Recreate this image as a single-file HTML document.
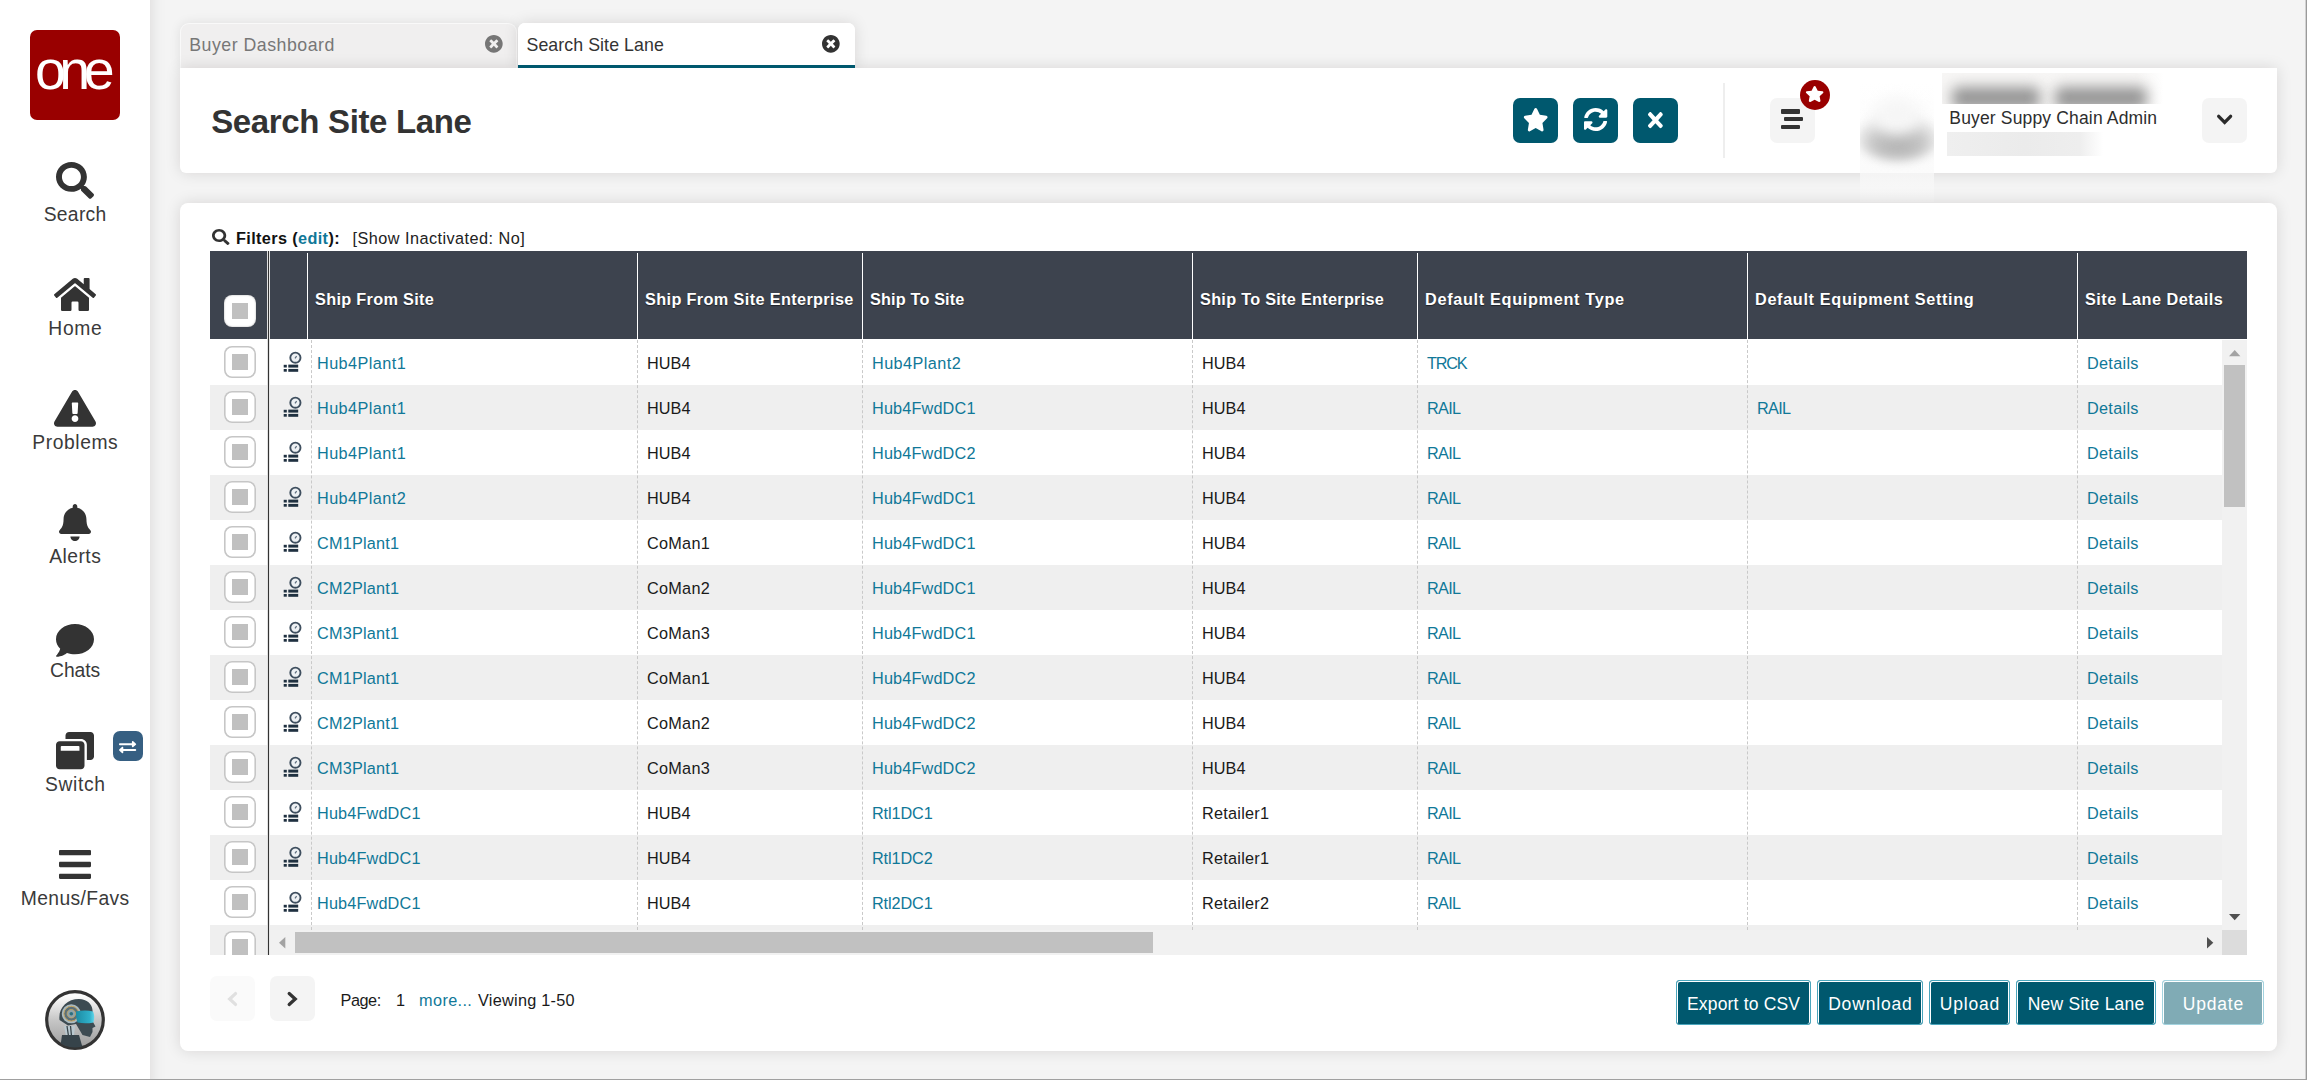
<!DOCTYPE html>
<html lang="en"><head><meta charset="utf-8"><title>Search Site Lane</title>
<style>
*{box-sizing:border-box;margin:0;padding:0}
html,body{width:2307px;height:1080px;overflow:hidden}
body{background:#f4f4f4;font-family:"Liberation Sans",sans-serif;color:#222;position:relative}
.ic{position:absolute;display:block;overflow:visible}
.abs{position:absolute}
.t{position:absolute;white-space:nowrap;line-height:1}
#side{position:absolute;left:-20px;top:-20px;width:170px;height:1120px;background:#fff;box-shadow:0 0 15px rgba(25,12,0,.125)}
.lbl{position:absolute;left:0;width:150px;text-align:center;font-size:19.3px;color:#3a3a3a;line-height:1;white-space:nowrap}
#logo{position:absolute;left:30px;top:30px;width:90px;height:90px;border-radius:7px;background:#990000}
.tab{position:absolute;top:23px;height:45px;border-radius:7px 7px 0 0}
.panel{position:absolute;background:#fff;box-shadow:0 0 15px rgba(25,12,0,.125)}
.hbtn{position:absolute;top:98px;width:45px;height:45px;border-radius:7px;background:#00586e}
.gbtn{position:absolute;width:45px;height:45px;border-radius:7px;background:#f4f4f4}
.th{position:absolute;top:251px;height:88px;background:#3d434e}
.thl{position:absolute;top:253px;width:1px;height:86px;background:#fff}
.tht{position:absolute;top:291px;font-weight:700;font-size:16.25px;color:#fff;white-space:nowrap;line-height:1;letter-spacing:.3px;text-shadow:0 1px 1px rgba(0,0,0,.5)}
.row{position:absolute;left:210px;width:2013px;height:45px}
.row.g{background:#efefef}
.c{position:absolute;font-size:16.25px;white-space:nowrap;line-height:1;color:#1a1a1a}
a.c,.lk{color:#107898;text-decoration:none}
.cb{position:absolute;left:224.2px;width:31.6px;height:31.6px;border-radius:8px;background:#fff;box-shadow:inset 0 0 0 1.6px #c6c6c6}
.cb i{position:absolute;left:7.8px;top:7.9px;width:16px;height:16px;background:#c0c0c0}
.vl{position:absolute;top:340px;width:0;height:590px;border-left:1px dashed #c9c9c9}
.btn{position:absolute;top:980px;height:45px;background:#00586e;border:1px solid #4ba6bd;border-radius:3px;box-shadow:inset 1px 1px 0 0 #fff,inset -1px 0 0 0 #fff;color:#fff;font-size:17.5px;text-align:center;line-height:47px;white-space:nowrap}
</style></head>
<body>
<div id="side"></div>
<div id="logo"><span class="t" style="left:5px;top:13px;font-size:55.5px;color:#fff;letter-spacing:-6.5px">one</span></div>
<svg class="ic" style="left:56px;top:162.3px;width:38px;height:36.7px" viewBox="0 0 512 512" preserveAspectRatio="none"><path fill="#333" d="M505 442.7L405.3 343c-4.5-4.5-10.6-7-17-7H372c27.6-35.3 44-79.700 44-128C416 93.100 322.900 0 208 0S0 93.100 0 208s93.100 208 208 208c48.300 0 92.700-16.400 128-44v16.300c0 6.400 2.500 12.500 7 17l99.700 99.700c9.400 9.400 24.600 9.400 33.900 0l28.300-28.300c9.400-9.400 9.400-24.600.100-34zM208 336c-70.700 0-128-57.200-128-128 0-70.700 57.200-128 128-128 70.700 0 128 57.200 128 128 0 70.700-57.200 128-128 128z"/></svg>
<div class="lbl" style="top:204.66px;letter-spacing:0.301px;padding-left:0.301px">Search</div>
<svg class="ic" style="left:54px;top:277.7px;width:42px;height:33.0px" viewBox="0 32 576 448" preserveAspectRatio="none"><path fill="#333" d="M280.37 148.26L96 300.11V464a16 16 0 0 0 16 16l112.06-.29a16 16 0 0 0 15.920-16V368a16 16 0 0 1 16-16h64a16 16 0 0 1 16 16v95.640a16 16 0 0 0 16 16.050L464 480a16 16 0 0 0 16-16V300L295.670 148.260a12.190 12.190 0 0 0-15.300 0zM571.600 251.470L488 182.560V44.050a12 12 0 0 0-12-12h-56a12 12 0 0 0-12 12v72.610L318.470 43a48 48 0 0 0-61 0L4.340 251.470a12 12 0 0 0-1.600 16.900l25.500 31A12 12 0 0 0 45.150 301l235.220-193.740a12.190 12.190 0 0 1 15.300 0L530.900 301a12 12 0 0 0 16.900-1.600l25.500-31a12 12 0 0 0-1.700-16.930z"/></svg>
<div class="lbl" style="top:318.66px;letter-spacing:0.621px;padding-left:0.621px">Home</div>
<svg class="ic" style="left:54px;top:390px;width:42px;height:36.7px" viewBox="0 0 576 512" preserveAspectRatio="none"><path fill="#333" d="M569.517 440.013C587.975 472.007 564.806 512 527.94 512H48.054c-36.937 0-59.999-40.055-41.577-71.987L246.423 23.985c18.467-32.009 64.720-31.951 83.154 0l239.940 416.028zM288 354c-25.405 0-46 20.595-46 46s20.595 46 46 46 46-20.595 46-46-20.595-46-46-46zm-43.673-165.346l7.418 136c.347 6.364 5.609 11.346 11.982 11.346h48.546c6.373 0 11.635-4.982 11.982-11.346l7.418-136c.375-6.874-5.098-12.654-11.982-12.654h-63.383c-6.884 0-12.356 5.780-11.981 12.654z"/></svg>
<div class="lbl" style="top:432.66px;letter-spacing:0.566px;padding-left:0.566px">Problems</div>
<svg class="ic" style="left:59px;top:504px;width:32px;height:37px" viewBox="0 0 448 512" preserveAspectRatio="none"><path fill="#333" d="M224 512c35.32 0 63.97-28.65 63.97-64H160.030c0 35.350 28.650 64 63.970 64zm215.390-149.710c-19.320-20.760-55.470-51.990-55.470-154.290 0-77.700-54.480-139.900-127.940-155.160V32c0-17.670-14.320-32-31.980-32s-31.980 14.330-31.980 32v20.840C118.560 68.100 64.080 130.300 64.080 208c0 102.300-36.150 133.530-55.470 154.290-6 6.450-8.660 14.160-8.610 21.710.110 16.400 12.980 32 32.100 32h383.800c19.120 0 32-15.600 32.100-32 .050-7.550-2.610-15.270-8.610-21.710z"/></svg>
<div class="lbl" style="top:546.66px;letter-spacing:0.481px;padding-left:0.481px">Alerts</div>
<svg class="ic" style="left:56px;top:624px;width:38px;height:32.7px" viewBox="0 32 512 448" preserveAspectRatio="none"><path fill="#333" d="M256 32C114.6 32 0 125.1 0 240c0 49.600 21.400 95 57 130.700C44.500 421.100 2.700 466 2.200 466.500c-2.200 2.300-2.800 5.700-1.500 8.700S4.800 480 8 480c66.300 0 116-31.800 140.600-51.400 32.700 12.300 69 19.400 107.400 19.400 141.400 0 256-93.100 256-208S397.400 32 256 32z"/></svg>
<div class="lbl" style="top:660.66px;letter-spacing:-0.094px;padding-left:0px">Chats</div>
<svg class="ic" style="left:56px;top:731.7px;width:38px;height:37.3px" viewBox="0 0 512 512" preserveAspectRatio="none"><path fill="#333" d="M512 48v288c0 26.500-21.500 48-48 48h-48V176c0-44.100-35.900-80-80-80H128V48c0-26.500 21.500-48 48-48h288c26.500 0 48 21.500 48 48zM384 176v288c0 26.500-21.500 48-48 48H48c-26.500 0-48-21.500-48-48V176c0-26.500 21.500-48 48-48h288c26.500 0 48 21.500 48 48zm-68 28c0-6.600-5.400-12-12-12H76c-6.600 0-12 5.400-12 12v52h252v-52z"/></svg>
<div class="lbl" style="top:774.66px;letter-spacing:0.601px;padding-left:0.601px">Switch</div>
<div class="abs" style="left:113px;top:731px;width:30px;height:30px;border-radius:7px;background:#365f82"></div>
<svg class="ic" style="left:118.9px;top:741px;width:17.2px;height:12.2px" viewBox="0 56 512 400" preserveAspectRatio="none"><path fill="#fff" d="M0 168v-16c0-13.255 10.745-24 24-24h360V80c0-21.367 25.899-32.042 40.971-16.971l80 80c9.372 9.373 9.372 24.569 0 33.941l-80 80C409.956 271.982 384 261.456 384 240v-48H24c-13.255 0-24-10.745-24-24zm488 152H128v-48c0-21.314-25.862-32.080-40.971-16.971l-80 80c-9.372 9.373-9.372 24.569 0 33.941l80 80C102.057 463.997 128 453.437 128 432v-48h360c13.255 0 24-10.745 24-24v-16c0-13.255-10.745-24-24-24z"/></svg>
<svg class="ic" style="left:59px;top:850px;width:32px;height:29px" viewBox="0 60 448 392" preserveAspectRatio="none"><path fill="#333" d="M16 132h416c8.837 0 16-7.163 16-16V76c0-8.837-7.163-16-16-16H16C7.163 60 0 67.163 0 76v40c0 8.837 7.163 16 16 16zm0 160h416c8.837 0 16-7.163 16-16v-40c0-8.837-7.163-16-16-16H16c-8.837 0-16 7.163-16 16v40c0 8.837 7.163 16 16 16zm0 160h416c8.837 0 16-7.163 16-16v-40c0-8.837-7.163-16-16-16H16c-8.837 0-16 7.163-16 16v40c0 8.837 7.163 16 16 16z"/></svg>
<div class="lbl" style="top:888.66px;letter-spacing:0.365px;padding-left:0.365px">Menus/Favs</div>
<svg class="ic" style="left:45px;top:990px;width:60px;height:60px" viewBox="0 0 60 60">
<defs><linearGradient id="rg" x1="0" y1="0" x2="0" y2="1"><stop offset="0.08" stop-color="#fbfbfb"/><stop offset="0.5" stop-color="#c6c6c6"/><stop offset="1" stop-color="#9c9c9c"/></linearGradient>
<linearGradient id="vg" x1="0" y1="0" x2="1" y2="0"><stop offset="0" stop-color="#1d8ba3"/><stop offset="0.75" stop-color="#2fb0c9"/><stop offset="1" stop-color="#63d6ea"/></linearGradient>
<clipPath id="rc"><circle cx="30" cy="30" r="27.5"/></clipPath></defs>
<circle cx="30" cy="30" r="28.3" fill="url(#rg)" stroke="#333" stroke-width="3.2"/>
<g clip-path="url(#rc)">
<path d="M19 36L21 46 29 46 30 36z" fill="#b9c8cf"/>
<path d="M22 36l1.500 10M25.500 36l1 10" stroke="#39454b" stroke-width="1.300" fill="none"/>
<path d="M17 45h17l4 14H15z" fill="#36434a"/>
<path d="M14.500 30C13 18 22 9 34 9c8 0 13 5 13.500 11l.5 12 2.500 4.500-3 1.500v4l-2.500 5-7.500-2-6.500-11-8 1.500z" fill="#3d4b52"/>
<circle cx="26.300" cy="23.700" r="9.500" fill="#a9bac1"/>
<circle cx="26.300" cy="23.700" r="7.400" fill="#5c7078" stroke="#c8a762" stroke-width="1"/>
<circle cx="26.300" cy="23.700" r="4.200" fill="#8fa3ab" stroke="#c8a762" stroke-width=".8"/>
<circle cx="26.300" cy="23.700" r="1.800" fill="#2c6f80"/>
<path d="M31 21.500c6-1.500 12-1.500 17 0 1.500 3 1.500 7 .5 11-6 1.200-11 1-16 0-1.500-4-1.500-8-1.500-11z" fill="url(#vg)"/>
</g>
</svg>
<div class="tab" style="left:180px;width:337px;background:#f0efef;border:1px solid #f9f9f9;border-bottom:0;border-radius:9px 9px 0 0;box-shadow:0 0 12px rgba(25,12,0,.09)"></div>
<div class="tab" style="left:518px;width:337px;background:#fff;box-shadow:0 0 15px rgba(25,12,0,.125)"></div>
<span class="t" style="left:189.2px;top:36.7px;font-size:17.75px;color:#777;letter-spacing:0.504px">Buyer Dashboard</span>
<svg class="ic" style="left:485.2px;top:35.1px;width:17.7px;height:17.7px" viewBox="8 8 496 496" preserveAspectRatio="none"><path fill="#767676" d="M256 8C119 8 8 119 8 256s111 248 248 248 248-111 248-248S393 8 256 8zm121.6 313.1c4.7 4.7 4.7 12.3 0 17L338 377.600c-4.700 4.700-12.300 4.700-17 0L256 312l-65.100 65.600c-4.700 4.700-12.300 4.700-17 0L134.400 338c-4.700-4.700-4.700-12.300 0-17l65.600-65-65.600-65.100c-4.700-4.700-4.700-12.300 0-17l39.600-39.600c4.700-4.700 12.300-4.700 17 0l65 65.700 65.100-65.600c4.700-4.700 12.300-4.700 17 0l39.600 39.600c4.700 4.700 4.700 12.300 0 17L312 256l65.600 65.100z"/></svg>
<div class="panel" style="left:180px;top:68px;width:2097px;height:104.5px;border-radius:0 0 6px 6px"></div>
<div class="tab" style="left:518px;width:337px;background:#fff;border-bottom:3px solid #00586e"></div>
<span class="t" style="left:526.5px;top:36.7px;font-size:17.75px;color:#333;letter-spacing:0.074px">Search Site Lane</span>
<svg class="ic" style="left:822.2px;top:35.1px;width:17.7px;height:17.7px" viewBox="8 8 496 496" preserveAspectRatio="none"><path fill="#333" d="M256 8C119 8 8 119 8 256s111 248 248 248 248-111 248-248S393 8 256 8zm121.6 313.1c4.7 4.7 4.7 12.3 0 17L338 377.600c-4.700 4.700-12.300 4.700-17 0L256 312l-65.100 65.600c-4.700 4.700-12.300 4.700-17 0L134.400 338c-4.700-4.700-4.700-12.300 0-17l65.600-65-65.600-65.100c-4.700-4.700-4.700-12.300 0-17l39.600-39.600c4.700-4.700 12.300-4.700 17 0l65 65.700 65.100-65.600c4.700-4.700 12.300-4.700 17 0l39.600 39.600c4.700 4.700 4.700 12.300 0 17L312 256l65.600 65.100z"/></svg>
<span class="t" style="left:211.2px;top:105px;font-size:33px;font-weight:700;color:#333;letter-spacing:-.35px">Search Site Lane</span>
<div class="hbtn" style="left:1513px"></div><div class="hbtn" style="left:1573px"></div><div class="hbtn" style="left:1633px"></div>
<svg class="ic" style="left:1523.8px;top:107.8px;width:23.4px;height:23.4px" viewBox="24 0 528 512" preserveAspectRatio="none"><path fill="#fff" d="M259.3 17.8L194 150.2 47.9 171.5c-26.2 3.8-36.7 36.1-17.7 54.6l105.7 103-25 145.5c-4.5 26.3 23.2 46 46.4 33.7L288 439.6l130.7 68.7c23.2 12.2 50.9-7.4 46.4-33.7l-25-145.5 105.7-103c19-18.500 8.500-50.800-17.700-54.600L382 150.200 316.700 17.800c-11.700-23.600-45.600-23.900-57.400 0z"/></svg>
<svg class="ic" style="left:1583.9px;top:108px;width:23.3px;height:23px" viewBox="8 8 496 496" preserveAspectRatio="none"><path fill="#fff" d="M370.72 133.28C339.458 104.008 298.888 87.962 255.848 88c-77.458.068-144.328 53.178-162.791 126.850-1.344 5.363-6.122 9.150-11.651 9.150H24.103c-7.498 0-13.194-6.807-11.807-14.176C33.933 94.924 134.813 8 256 8c66.448 0 126.791 26.136 171.315 68.685L463.030 40.970C478.149 25.851 504 36.559 504 57.941V192c0 13.255-10.745 24-24 24H345.941c-21.382 0-32.090-25.851-16.971-40.971l41.750-41.749zM32 296h134.059c21.382 0 32.090 25.851 16.971 40.971l-41.750 41.750c31.262 29.273 71.835 45.319 114.876 45.280 77.418-.070 144.315-53.144 162.787-126.849 1.344-5.363 6.122-9.150 11.651-9.150h57.304c7.498 0 13.194 6.807 11.807 14.176C478.067 417.076 377.187 504 256 504c-66.448 0-126.791-26.136-171.315-68.685L48.970 471.030C33.851 486.149 8 475.441 8 454.059V320c0-13.255 10.745-24 24-24z"/></svg>
<svg class="ic" style="left:1648.2px;top:111.7px;width:14.8px;height:16.3px" viewBox="0 80 352 352" preserveAspectRatio="none"><path fill="#fff" d="M242.72 256l100.07-100.07c12.28-12.28 12.28-32.19 0-44.48l-22.240-22.240c-12.280-12.280-32.190-12.280-44.480 0L176 189.280 75.930 89.210c-12.280-12.280-32.190-12.280-44.480 0L9.210 111.450c-12.280 12.280-12.280 32.190 0 44.480L109.280 256 9.210 356.070c-12.280 12.280-12.280 32.190 0 44.480l22.240 22.240c12.280 12.280 32.200 12.280 44.480 0L176 322.720l100.070 100.070c12.280 12.280 32.200 12.280 44.480 0l22.240-22.240c12.280-12.280 12.280-32.190 0-44.480L242.720 256z"/></svg>
<div class="abs" style="left:1723px;top:83px;width:2px;height:75px;background:#eee"></div>
<div class="gbtn" style="left:1770px;top:98px"></div>
<div class="abs" style="left:1781px;top:109.4px;width:19.2px;height:4.2px;border-radius:1px;background:#333"></div>
<div class="abs" style="left:1783.9px;top:117.3px;width:19.2px;height:4.2px;border-radius:1px;background:#333"></div>
<div class="abs" style="left:1781px;top:125.3px;width:19.2px;height:4.2px;border-radius:1px;background:#333"></div>
<div class="abs" style="left:1800px;top:80px;width:30px;height:30px;border-radius:50%;background:#990000"></div>
<svg class="ic" style="left:1806px;top:86.4px;width:17.3px;height:16.0px" viewBox="24 0 528 512" preserveAspectRatio="none"><path fill="#fff" d="M259.3 17.8L194 150.2 47.9 171.5c-26.2 3.8-36.7 36.1-17.7 54.6l105.7 103-25 145.5c-4.5 26.3 23.2 46 46.4 33.7L288 439.6l130.7 68.7c23.2 12.2 50.9-7.4 46.4-33.7l-25-145.5 105.7-103c19-18.500 8.500-50.800-17.700-54.600L382 150.200 316.700 17.800c-11.700-23.600-45.600-23.900-57.400 0z"/></svg>
<div class="abs" style="left:1860px;top:83px;width:74px;height:119px;overflow:hidden;background:linear-gradient(180deg,rgba(255,255,255,.9) 0,rgba(250,250,250,.75) 70%,rgba(247,247,247,.6) 100%)"><div class="abs" style="left:-4px;top:32px;width:84px;height:46px;border-radius:50%;background:radial-gradient(ellipse at 50% 62%,#b2b2b2 0,#c4c4c4 40%,rgba(228,228,228,.6) 70%,rgba(245,245,245,0) 100%);filter:blur(5px)"></div><div class="abs" style="left:12px;top:14px;width:50px;height:38px;border-radius:50%;background:#f6f6f6;filter:blur(7px)"></div></div>
<div class="abs" style="left:1942px;top:73px;width:222px;height:30.5px;overflow:hidden;background:linear-gradient(90deg,#f7f6f5 0,#f7f6f5 88%,#fff 100%)"><div class="abs" style="left:10px;top:14px;width:88px;height:22px;border-radius:6px;background:#959595;filter:blur(7px)"></div><div class="abs" style="left:113px;top:14px;width:92px;height:22px;border-radius:6px;background:#959595;filter:blur(7px)"></div></div>
<span class="t" style="left:1949.3px;top:110.3px;font-size:17.5px;color:#2d2d2d;letter-spacing:0.159px">Buyer Suppy Chain Admin</span>
<div class="abs" style="left:1947px;top:132px;width:156px;height:24px;background:linear-gradient(90deg,#efefef 0,#ebebeb 50%,#eeeeee 85%,#fff 100%)"></div>
<div class="gbtn" style="left:2202px;top:98px"></div>
<svg class="ic" style="left:2212px;top:108px;width:25px;height:24px" viewBox="0 0 25 24"><path d="M6.700 8.300L12.650 14.400l5.950-6.100" fill="none" stroke="#2a2a2a" stroke-width="3.300" stroke-linecap="round" stroke-linejoin="miter"/></svg>
<div class="panel" style="left:180px;top:203px;width:2097px;height:848px;border-radius:8px"></div>
<svg class="ic" style="left:212px;top:229px;width:17.5px;height:16px" viewBox="0 0 512 512" preserveAspectRatio="none"><path fill="#333" d="M505 442.7L405.3 343c-4.5-4.5-10.6-7-17-7H372c27.6-35.3 44-79.700 44-128C416 93.100 322.900 0 208 0S0 93.100 0 208s93.100 208 208 208c48.300 0 92.700-16.400 128-44v16.300c0 6.400 2.500 12.500 7 17l99.700 99.700c9.400 9.400 24.600 9.400 33.900 0l28.300-28.300c9.400-9.400 9.400-24.600.100-34zM208 336c-70.700 0-128-57.200-128-128 0-70.700 57.200-128 128-128 70.700 0 128 57.200 128 128 0 70.700-57.200 128-128 128z"/></svg>
<span class="t" style="left:236px;top:230px;font-size:16.25px;font-weight:700;color:#111;letter-spacing:.37px">Filters (<span style="color:#107898">edit</span>):</span>
<span class="t" style="left:352.5px;top:230px;font-size:16.25px;color:#222;letter-spacing:.46px">[Show Inactivated: No]</span>
<div class="th" style="left:210px;width:57px"></div>
<div class="th" style="left:270px;width:1977px"></div>
<div class="thl" style="left:307px"></div>
<span class="tht" style="left:315px;letter-spacing:0.325px">Ship From Site</span>
<div class="thl" style="left:637px"></div>
<span class="tht" style="left:645px;letter-spacing:0.368px">Ship From Site Enterprise</span>
<div class="thl" style="left:862px"></div>
<span class="tht" style="left:870px;letter-spacing:0.156px">Ship To Site</span>
<div class="thl" style="left:1192px"></div>
<span class="tht" style="left:1200px;letter-spacing:0.287px">Ship To Site Enterprise</span>
<div class="thl" style="left:1417px"></div>
<span class="tht" style="left:1425px;letter-spacing:0.682px">Default Equipment Type</span>
<div class="thl" style="left:1747px"></div>
<span class="tht" style="left:1755px;letter-spacing:0.653px">Default Equipment Setting</span>
<div class="thl" style="left:2077px"></div>
<span class="tht" style="left:2085px;letter-spacing:0.477px">Site Lane Details</span>
<div class="abs" style="left:224px;top:295px;width:32px;height:32px;border-radius:8px;background:#fff;box-shadow:0 0 2px rgba(0,0,0,.35) inset"><i class="abs" style="left:8px;top:8px;width:16px;height:16px;background:#c0c0c0"></i></div>
<div class="row" style="top:340px"></div>
<div class="row g" style="top:385px"></div>
<div class="row" style="top:430px"></div>
<div class="row g" style="top:475px"></div>
<div class="row" style="top:520px"></div>
<div class="row g" style="top:565px"></div>
<div class="row" style="top:610px"></div>
<div class="row g" style="top:655px"></div>
<div class="row" style="top:700px"></div>
<div class="row g" style="top:745px"></div>
<div class="row" style="top:790px"></div>
<div class="row g" style="top:835px"></div>
<div class="row" style="top:880px"></div>
<div class="row g" style="top:925px;height:30px"></div>
<div class="vl" style="left:311px"></div>
<div class="vl" style="left:637px"></div>
<div class="vl" style="left:862px"></div>
<div class="vl" style="left:1192px"></div>
<div class="vl" style="left:1417px"></div>
<div class="vl" style="left:1747px"></div>
<div class="vl" style="left:2077px"></div>
<div class="cb" style="top:346.2px"><i></i></div>
<svg class="ic" style="left:283px;top:351.2px;width:19px;height:22px" viewBox="0 0 19 22"><circle cx="12.4" cy="6.7" r="5.1" fill="#eef1f4" stroke="#3f4f5f" stroke-width="1.9"/><path d="M12 7.300l1.600-2.200" stroke="#5a6a7a" stroke-width="1.200" fill="none"/><rect x="5.300" y="13.600" width="9.900" height="3" fill="#1f3040"/><rect x="0.700" y="13.800" width="3.100" height="2.700" fill="#1f3040"/><rect x="5.300" y="17.900" width="9.900" height="2.900" fill="#1f3040"/><rect x="0.700" y="18" width="3.100" height="2.700" fill="#1f3040"/></svg>
<span class="c lk" style="left:317px;top:355.2px;letter-spacing:0.421px">Hub4Plant1</span>
<span class="c" style="left:647px;top:355.2px;letter-spacing:0.07px">HUB4</span>
<span class="c lk" style="left:872px;top:355.2px;letter-spacing:0.421px">Hub4Plant2</span>
<span class="c" style="left:1202px;top:355.2px;letter-spacing:0.07px">HUB4</span>
<span class="c lk" style="left:1427px;top:355.2px;letter-spacing:-1.247px">TRCK</span>
<span class="c lk" style="left:2087px;top:355.2px;letter-spacing:0.291px">Details</span>
<div class="cb" style="top:391.2px"><i></i></div>
<svg class="ic" style="left:283px;top:396.2px;width:19px;height:22px" viewBox="0 0 19 22"><circle cx="12.4" cy="6.7" r="5.1" fill="#eef1f4" stroke="#3f4f5f" stroke-width="1.9"/><path d="M12 7.300l1.600-2.200" stroke="#5a6a7a" stroke-width="1.200" fill="none"/><rect x="5.300" y="13.600" width="9.900" height="3" fill="#1f3040"/><rect x="0.700" y="13.800" width="3.100" height="2.700" fill="#1f3040"/><rect x="5.300" y="17.900" width="9.900" height="2.900" fill="#1f3040"/><rect x="0.700" y="18" width="3.100" height="2.700" fill="#1f3040"/></svg>
<span class="c lk" style="left:317px;top:400.2px;letter-spacing:0.421px">Hub4Plant1</span>
<span class="c" style="left:647px;top:400.2px;letter-spacing:0.07px">HUB4</span>
<span class="c lk" style="left:872px;top:400.2px;letter-spacing:0.152px">Hub4FwdDC1</span>
<span class="c" style="left:1202px;top:400.2px;letter-spacing:0.07px">HUB4</span>
<span class="c lk" style="left:1427px;top:400.2px;letter-spacing:-0.712px">RAIL</span>
<span class="c lk" style="left:1757px;top:400.2px;letter-spacing:-0.712px">RAIL</span>
<span class="c lk" style="left:2087px;top:400.2px;letter-spacing:0.291px">Details</span>
<div class="cb" style="top:436.2px"><i></i></div>
<svg class="ic" style="left:283px;top:441.2px;width:19px;height:22px" viewBox="0 0 19 22"><circle cx="12.4" cy="6.7" r="5.1" fill="#eef1f4" stroke="#3f4f5f" stroke-width="1.9"/><path d="M12 7.300l1.600-2.200" stroke="#5a6a7a" stroke-width="1.200" fill="none"/><rect x="5.300" y="13.600" width="9.900" height="3" fill="#1f3040"/><rect x="0.700" y="13.800" width="3.100" height="2.700" fill="#1f3040"/><rect x="5.300" y="17.900" width="9.900" height="2.900" fill="#1f3040"/><rect x="0.700" y="18" width="3.100" height="2.700" fill="#1f3040"/></svg>
<span class="c lk" style="left:317px;top:445.2px;letter-spacing:0.421px">Hub4Plant1</span>
<span class="c" style="left:647px;top:445.2px;letter-spacing:0.07px">HUB4</span>
<span class="c lk" style="left:872px;top:445.2px;letter-spacing:0.152px">Hub4FwdDC2</span>
<span class="c" style="left:1202px;top:445.2px;letter-spacing:0.07px">HUB4</span>
<span class="c lk" style="left:1427px;top:445.2px;letter-spacing:-0.712px">RAIL</span>
<span class="c lk" style="left:2087px;top:445.2px;letter-spacing:0.291px">Details</span>
<div class="cb" style="top:481.2px"><i></i></div>
<svg class="ic" style="left:283px;top:486.2px;width:19px;height:22px" viewBox="0 0 19 22"><circle cx="12.4" cy="6.7" r="5.1" fill="#eef1f4" stroke="#3f4f5f" stroke-width="1.9"/><path d="M12 7.300l1.600-2.200" stroke="#5a6a7a" stroke-width="1.200" fill="none"/><rect x="5.300" y="13.600" width="9.900" height="3" fill="#1f3040"/><rect x="0.700" y="13.800" width="3.100" height="2.700" fill="#1f3040"/><rect x="5.300" y="17.900" width="9.900" height="2.900" fill="#1f3040"/><rect x="0.700" y="18" width="3.100" height="2.700" fill="#1f3040"/></svg>
<span class="c lk" style="left:317px;top:490.2px;letter-spacing:0.421px">Hub4Plant2</span>
<span class="c" style="left:647px;top:490.2px;letter-spacing:0.07px">HUB4</span>
<span class="c lk" style="left:872px;top:490.2px;letter-spacing:0.152px">Hub4FwdDC1</span>
<span class="c" style="left:1202px;top:490.2px;letter-spacing:0.07px">HUB4</span>
<span class="c lk" style="left:1427px;top:490.2px;letter-spacing:-0.712px">RAIL</span>
<span class="c lk" style="left:2087px;top:490.2px;letter-spacing:0.291px">Details</span>
<div class="cb" style="top:526.2px"><i></i></div>
<svg class="ic" style="left:283px;top:531.2px;width:19px;height:22px" viewBox="0 0 19 22"><circle cx="12.4" cy="6.7" r="5.1" fill="#eef1f4" stroke="#3f4f5f" stroke-width="1.9"/><path d="M12 7.300l1.600-2.200" stroke="#5a6a7a" stroke-width="1.200" fill="none"/><rect x="5.300" y="13.600" width="9.900" height="3" fill="#1f3040"/><rect x="0.700" y="13.800" width="3.100" height="2.700" fill="#1f3040"/><rect x="5.300" y="17.900" width="9.900" height="2.900" fill="#1f3040"/><rect x="0.700" y="18" width="3.100" height="2.700" fill="#1f3040"/></svg>
<span class="c lk" style="left:317px;top:535.2px;letter-spacing:0.195px">CM1Plant1</span>
<span class="c" style="left:647px;top:535.2px;letter-spacing:0.27px">CoMan1</span>
<span class="c lk" style="left:872px;top:535.2px;letter-spacing:0.152px">Hub4FwdDC1</span>
<span class="c" style="left:1202px;top:535.2px;letter-spacing:0.07px">HUB4</span>
<span class="c lk" style="left:1427px;top:535.2px;letter-spacing:-0.712px">RAIL</span>
<span class="c lk" style="left:2087px;top:535.2px;letter-spacing:0.291px">Details</span>
<div class="cb" style="top:571.2px"><i></i></div>
<svg class="ic" style="left:283px;top:576.2px;width:19px;height:22px" viewBox="0 0 19 22"><circle cx="12.4" cy="6.7" r="5.1" fill="#eef1f4" stroke="#3f4f5f" stroke-width="1.9"/><path d="M12 7.300l1.600-2.200" stroke="#5a6a7a" stroke-width="1.200" fill="none"/><rect x="5.300" y="13.600" width="9.900" height="3" fill="#1f3040"/><rect x="0.700" y="13.800" width="3.100" height="2.700" fill="#1f3040"/><rect x="5.300" y="17.900" width="9.900" height="2.900" fill="#1f3040"/><rect x="0.700" y="18" width="3.100" height="2.700" fill="#1f3040"/></svg>
<span class="c lk" style="left:317px;top:580.2px;letter-spacing:0.195px">CM2Plant1</span>
<span class="c" style="left:647px;top:580.2px;letter-spacing:0.27px">CoMan2</span>
<span class="c lk" style="left:872px;top:580.2px;letter-spacing:0.152px">Hub4FwdDC1</span>
<span class="c" style="left:1202px;top:580.2px;letter-spacing:0.07px">HUB4</span>
<span class="c lk" style="left:1427px;top:580.2px;letter-spacing:-0.712px">RAIL</span>
<span class="c lk" style="left:2087px;top:580.2px;letter-spacing:0.291px">Details</span>
<div class="cb" style="top:616.2px"><i></i></div>
<svg class="ic" style="left:283px;top:621.2px;width:19px;height:22px" viewBox="0 0 19 22"><circle cx="12.4" cy="6.7" r="5.1" fill="#eef1f4" stroke="#3f4f5f" stroke-width="1.9"/><path d="M12 7.300l1.600-2.200" stroke="#5a6a7a" stroke-width="1.200" fill="none"/><rect x="5.300" y="13.600" width="9.900" height="3" fill="#1f3040"/><rect x="0.700" y="13.800" width="3.100" height="2.700" fill="#1f3040"/><rect x="5.300" y="17.900" width="9.900" height="2.900" fill="#1f3040"/><rect x="0.700" y="18" width="3.100" height="2.700" fill="#1f3040"/></svg>
<span class="c lk" style="left:317px;top:625.2px;letter-spacing:0.195px">CM3Plant1</span>
<span class="c" style="left:647px;top:625.2px;letter-spacing:0.27px">CoMan3</span>
<span class="c lk" style="left:872px;top:625.2px;letter-spacing:0.152px">Hub4FwdDC1</span>
<span class="c" style="left:1202px;top:625.2px;letter-spacing:0.07px">HUB4</span>
<span class="c lk" style="left:1427px;top:625.2px;letter-spacing:-0.712px">RAIL</span>
<span class="c lk" style="left:2087px;top:625.2px;letter-spacing:0.291px">Details</span>
<div class="cb" style="top:661.2px"><i></i></div>
<svg class="ic" style="left:283px;top:666.2px;width:19px;height:22px" viewBox="0 0 19 22"><circle cx="12.4" cy="6.7" r="5.1" fill="#eef1f4" stroke="#3f4f5f" stroke-width="1.9"/><path d="M12 7.300l1.600-2.200" stroke="#5a6a7a" stroke-width="1.200" fill="none"/><rect x="5.300" y="13.600" width="9.900" height="3" fill="#1f3040"/><rect x="0.700" y="13.800" width="3.100" height="2.700" fill="#1f3040"/><rect x="5.300" y="17.900" width="9.900" height="2.900" fill="#1f3040"/><rect x="0.700" y="18" width="3.100" height="2.700" fill="#1f3040"/></svg>
<span class="c lk" style="left:317px;top:670.2px;letter-spacing:0.195px">CM1Plant1</span>
<span class="c" style="left:647px;top:670.2px;letter-spacing:0.27px">CoMan1</span>
<span class="c lk" style="left:872px;top:670.2px;letter-spacing:0.152px">Hub4FwdDC2</span>
<span class="c" style="left:1202px;top:670.2px;letter-spacing:0.07px">HUB4</span>
<span class="c lk" style="left:1427px;top:670.2px;letter-spacing:-0.712px">RAIL</span>
<span class="c lk" style="left:2087px;top:670.2px;letter-spacing:0.291px">Details</span>
<div class="cb" style="top:706.2px"><i></i></div>
<svg class="ic" style="left:283px;top:711.2px;width:19px;height:22px" viewBox="0 0 19 22"><circle cx="12.4" cy="6.7" r="5.1" fill="#eef1f4" stroke="#3f4f5f" stroke-width="1.9"/><path d="M12 7.300l1.600-2.200" stroke="#5a6a7a" stroke-width="1.200" fill="none"/><rect x="5.300" y="13.600" width="9.900" height="3" fill="#1f3040"/><rect x="0.700" y="13.800" width="3.100" height="2.700" fill="#1f3040"/><rect x="5.300" y="17.900" width="9.900" height="2.900" fill="#1f3040"/><rect x="0.700" y="18" width="3.100" height="2.700" fill="#1f3040"/></svg>
<span class="c lk" style="left:317px;top:715.2px;letter-spacing:0.195px">CM2Plant1</span>
<span class="c" style="left:647px;top:715.2px;letter-spacing:0.27px">CoMan2</span>
<span class="c lk" style="left:872px;top:715.2px;letter-spacing:0.152px">Hub4FwdDC2</span>
<span class="c" style="left:1202px;top:715.2px;letter-spacing:0.07px">HUB4</span>
<span class="c lk" style="left:1427px;top:715.2px;letter-spacing:-0.712px">RAIL</span>
<span class="c lk" style="left:2087px;top:715.2px;letter-spacing:0.291px">Details</span>
<div class="cb" style="top:751.2px"><i></i></div>
<svg class="ic" style="left:283px;top:756.2px;width:19px;height:22px" viewBox="0 0 19 22"><circle cx="12.4" cy="6.7" r="5.1" fill="#eef1f4" stroke="#3f4f5f" stroke-width="1.9"/><path d="M12 7.300l1.600-2.200" stroke="#5a6a7a" stroke-width="1.200" fill="none"/><rect x="5.300" y="13.600" width="9.900" height="3" fill="#1f3040"/><rect x="0.700" y="13.800" width="3.100" height="2.700" fill="#1f3040"/><rect x="5.300" y="17.900" width="9.900" height="2.900" fill="#1f3040"/><rect x="0.700" y="18" width="3.100" height="2.700" fill="#1f3040"/></svg>
<span class="c lk" style="left:317px;top:760.2px;letter-spacing:0.195px">CM3Plant1</span>
<span class="c" style="left:647px;top:760.2px;letter-spacing:0.27px">CoMan3</span>
<span class="c lk" style="left:872px;top:760.2px;letter-spacing:0.152px">Hub4FwdDC2</span>
<span class="c" style="left:1202px;top:760.2px;letter-spacing:0.07px">HUB4</span>
<span class="c lk" style="left:1427px;top:760.2px;letter-spacing:-0.712px">RAIL</span>
<span class="c lk" style="left:2087px;top:760.2px;letter-spacing:0.291px">Details</span>
<div class="cb" style="top:796.2px"><i></i></div>
<svg class="ic" style="left:283px;top:801.2px;width:19px;height:22px" viewBox="0 0 19 22"><circle cx="12.4" cy="6.7" r="5.1" fill="#eef1f4" stroke="#3f4f5f" stroke-width="1.9"/><path d="M12 7.300l1.600-2.200" stroke="#5a6a7a" stroke-width="1.200" fill="none"/><rect x="5.300" y="13.600" width="9.900" height="3" fill="#1f3040"/><rect x="0.700" y="13.800" width="3.100" height="2.700" fill="#1f3040"/><rect x="5.300" y="17.900" width="9.900" height="2.900" fill="#1f3040"/><rect x="0.700" y="18" width="3.100" height="2.700" fill="#1f3040"/></svg>
<span class="c lk" style="left:317px;top:805.2px;letter-spacing:0.152px">Hub4FwdDC1</span>
<span class="c" style="left:647px;top:805.2px;letter-spacing:0.07px">HUB4</span>
<span class="c lk" style="left:872px;top:805.2px;letter-spacing:-0.119px">Rtl1DC1</span>
<span class="c" style="left:1202px;top:805.2px;letter-spacing:0.239px">Retailer1</span>
<span class="c lk" style="left:1427px;top:805.2px;letter-spacing:-0.712px">RAIL</span>
<span class="c lk" style="left:2087px;top:805.2px;letter-spacing:0.291px">Details</span>
<div class="cb" style="top:841.2px"><i></i></div>
<svg class="ic" style="left:283px;top:846.2px;width:19px;height:22px" viewBox="0 0 19 22"><circle cx="12.4" cy="6.7" r="5.1" fill="#eef1f4" stroke="#3f4f5f" stroke-width="1.9"/><path d="M12 7.300l1.600-2.200" stroke="#5a6a7a" stroke-width="1.200" fill="none"/><rect x="5.300" y="13.600" width="9.900" height="3" fill="#1f3040"/><rect x="0.700" y="13.800" width="3.100" height="2.700" fill="#1f3040"/><rect x="5.300" y="17.900" width="9.900" height="2.900" fill="#1f3040"/><rect x="0.700" y="18" width="3.100" height="2.700" fill="#1f3040"/></svg>
<span class="c lk" style="left:317px;top:850.2px;letter-spacing:0.152px">Hub4FwdDC1</span>
<span class="c" style="left:647px;top:850.2px;letter-spacing:0.07px">HUB4</span>
<span class="c lk" style="left:872px;top:850.2px;letter-spacing:-0.119px">Rtl1DC2</span>
<span class="c" style="left:1202px;top:850.2px;letter-spacing:0.239px">Retailer1</span>
<span class="c lk" style="left:1427px;top:850.2px;letter-spacing:-0.712px">RAIL</span>
<span class="c lk" style="left:2087px;top:850.2px;letter-spacing:0.291px">Details</span>
<div class="cb" style="top:886.2px"><i></i></div>
<svg class="ic" style="left:283px;top:891.2px;width:19px;height:22px" viewBox="0 0 19 22"><circle cx="12.4" cy="6.7" r="5.1" fill="#eef1f4" stroke="#3f4f5f" stroke-width="1.9"/><path d="M12 7.300l1.600-2.200" stroke="#5a6a7a" stroke-width="1.200" fill="none"/><rect x="5.300" y="13.600" width="9.900" height="3" fill="#1f3040"/><rect x="0.700" y="13.800" width="3.100" height="2.700" fill="#1f3040"/><rect x="5.300" y="17.900" width="9.900" height="2.900" fill="#1f3040"/><rect x="0.700" y="18" width="3.100" height="2.700" fill="#1f3040"/></svg>
<span class="c lk" style="left:317px;top:895.2px;letter-spacing:0.152px">Hub4FwdDC1</span>
<span class="c" style="left:647px;top:895.2px;letter-spacing:0.07px">HUB4</span>
<span class="c lk" style="left:872px;top:895.2px;letter-spacing:-0.119px">Rtl2DC1</span>
<span class="c" style="left:1202px;top:895.2px;letter-spacing:0.239px">Retailer2</span>
<span class="c lk" style="left:1427px;top:895.2px;letter-spacing:-0.712px">RAIL</span>
<span class="c lk" style="left:2087px;top:895.2px;letter-spacing:0.291px">Details</span>
<div class="abs" style="left:210px;top:925px;width:57px;height:30px;overflow:hidden"><div class="cb" style="left:14.2px;top:6.2px"><i></i></div></div>
<div class="abs" style="left:2222px;top:340px;width:25px;height:590px;background:#f1f1f1"></div>
<div class="abs" style="left:2224px;top:365px;width:21px;height:142px;background:#c1c1c1"></div>
<svg class="ic" style="left:2228.900px;top:349.700px;width:11.400px;height:6.300px" viewBox="0 0 13 7" preserveAspectRatio="none"><path d="M0 7L6.500 0 13 7z" fill="#a3a3a3"/></svg>
<svg class="ic" style="left:2228.900px;top:913.500px;width:11.400px;height:6.300px" viewBox="0 0 13 7" preserveAspectRatio="none"><path d="M0 0L6.500 7 13 0z" fill="#505050"/></svg>
<div class="abs" style="left:270px;top:930px;width:1952px;height:25px;background:#f1f1f1"></div>
<div class="abs" style="left:295px;top:932px;width:858px;height:21px;background:#c1c1c1"></div>
<svg class="ic" style="left:278.800px;top:936.900px;width:6.300px;height:11.400px" viewBox="0 0 7 13" preserveAspectRatio="none"><path d="M7 0L0 6.500 7 13z" fill="#a3a3a3"/></svg>
<svg class="ic" style="left:2207.300px;top:936.900px;width:6.300px;height:11.400px" viewBox="0 0 7 13" preserveAspectRatio="none"><path d="M0 0L7 6.500 0 13z" fill="#505050"/></svg>
<div class="abs" style="left:2222px;top:930px;width:25px;height:25px;background:#dcdcdc"></div>
<div class="abs" style="left:267px;top:251px;width:3px;height:704px;background:#fff"></div><div class="abs" style="left:267px;top:251px;width:1px;height:704px;background:rgba(51,51,51,.15)"></div><div class="abs" style="left:268px;top:251px;width:1px;height:704px;background:#333"></div><div class="abs" style="left:269px;top:251px;width:1px;height:704px;background:rgba(51,51,51,.12)"></div>
<div class="gbtn" style="left:210px;top:976px;background:#fafafa"></div>
<svg class="ic" style="left:220px;top:985px;width:25px;height:28px" viewBox="0 0 25 28"><path d="M15.500 8.600L9.700 14l5.800 5.400" fill="none" stroke="#e0e0e0" stroke-width="3.300" stroke-linecap="round" stroke-linejoin="miter"/></svg>
<div class="gbtn" style="left:270px;top:976px"></div>
<svg class="ic" style="left:280px;top:985px;width:25px;height:28px" viewBox="0 0 25 28"><path d="M9.200 8.600L15.200 14l-6 5.400" fill="none" stroke="#333" stroke-width="3.300" stroke-linecap="round" stroke-linejoin="miter"/></svg>
<span class="t" style="left:340.5px;top:992.2px;font-size:16.25px;color:#1a1a1a;letter-spacing:-0.442px">Page:</span>
<span class="t" style="left:396.0px;top:992.2px;font-size:16.25px;color:#1a1a1a;letter-spacing:0px">1</span>
<span class="t lk" style="left:419.09999999999997px;top:992.2px;font-size:16.25px;letter-spacing:0.354px">more...</span>
<span class="t" style="left:478.0px;top:992.2px;font-size:16.25px;color:#1a1a1a;letter-spacing:0.268px">Viewing 1-50</span>
<div class="btn" style="left:1676px;width:135px;letter-spacing:0.176px;padding-left:0.176px;">Export to CSV</div>
<div class="btn" style="left:1817px;width:106px;letter-spacing:0.839px;padding-left:0.839px;">Download</div>
<div class="btn" style="left:1929px;width:81px;letter-spacing:0.806px;padding-left:0.806px;">Upload</div>
<div class="btn" style="left:2016px;width:140px;letter-spacing:0.223px;padding-left:0.223px;">New Site Lane</div>
<div class="btn" style="left:2162px;width:102px;letter-spacing:0.812px;padding-left:0.812px;background:#80abb5;border-color:#a3d3df">Update</div>
<div class="abs" style="left:2305px;top:0;width:1px;height:1080px;background:#d2d2d2"></div><div class="abs" style="left:2306px;top:0;width:1px;height:1080px;background:#9a9a9a"></div>
<div class="abs" style="left:0;top:1079px;width:2307px;height:1px;background:#a0a0a0"></div>
</body></html>
